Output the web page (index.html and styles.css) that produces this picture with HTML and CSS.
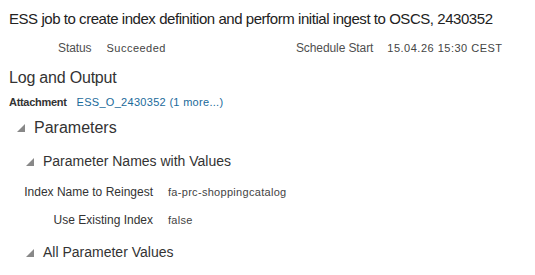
FILE: index.html
```html
<!DOCTYPE html>
<html>
<head>
<meta charset="utf-8">
<link rel="stylesheet" href="styles.css">
</head>
<body>
<div class="page">
  <h1 class="title">ESS job to create index definition and perform initial ingest to OSCS, 2430352</h1>
  <div class="summary">
    <div class="pair status"><span class="lbl">Status</span><span class="val">Succeeded</span></div>
    <div class="pair sched"><span class="lbl">Schedule Start</span><span class="val">15.04.26 15:30 CEST</span></div>
  </div>
  <h2 class="section">Log and Output</h2>
  <div class="attach"><span class="alabel">Attachment</span><a class="link">ESS_O_2430352 (1 more...)</a></div>
  <div class="disclosure d1"><span class="tri"></span><span class="dtext">Parameters</span></div>
  <div class="disclosure d2"><span class="tri"></span><span class="dtext">Parameter Names with Values</span></div>
  <div class="form">
    <div class="flabel">Index Name to Reingest</div><div class="fval">fa-prc-shoppingcatalog</div>
    <div class="flabel">Use Existing Index</div><div class="fval">false</div>
  </div>
  <div class="disclosure d3"><span class="tri"></span><span class="dtext">All Parameter Values</span></div>
</div>
</body>
</html>
```
FILE: styles.css
```css
html, body { margin: 0; padding: 0; background: #fff; }
body { font-family: "Liberation Sans", Arial, sans-serif; color: #333; }
.page { padding: 10px 9px 0 9px; }
.title { font-size: 15px; font-weight: normal; margin: 0; line-height: 18px; color: #222; white-space: nowrap; letter-spacing: -0.45px; }
.summary { display: flex; margin-top: 13px; font-size: 12px; line-height: 14px; }
.pair { display: flex; gap: 15px; }
.status { margin-left: 49px; }
.sched { margin-left: 130px; gap: 14px; }
.lbl { color: #4f4f4f; letter-spacing: -0.1px; }
.val { color: #444; font-size: 11px; letter-spacing: 0.5px; font-weight: normal; }
.section { font-size: 16px; font-weight: normal; margin: 13px 0 0 0; line-height: 19px; color: #333; letter-spacing: -0.2px; }
.attach { margin-top: 8px; font-size: 11px; line-height: 14px; display: flex; gap: 10px; }
.alabel { color: #333; font-weight: bold; letter-spacing: -0.3px; }
.link { color: #1a6a9a; letter-spacing: 0.3px; }
.disclosure { display: flex; align-items: center; }
.tri { width: 0; height: 0; border-left: 8px solid transparent; border-bottom: 8px solid #888; margin-right: 9px; }
.d1 { margin-top: 9px; padding-left: 8px; font-size: 16px; line-height: 19px; }
.d2 { margin-top: 16px; padding-left: 17px; font-size: 14px; line-height: 17px; }
.d3 { margin-top: 17px; padding-left: 17px; font-size: 14px; line-height: 17px; }
.dtext { color: #333; }
.form { display: grid; grid-template-columns: 144px auto; column-gap: 15px; row-gap: 14px; margin-top: 15px; font-size: 12px; line-height: 14px; }
.flabel { text-align: right; color: #333; }
.fval { font-size: 11px; color: #444; letter-spacing: 0.3px; }
```
